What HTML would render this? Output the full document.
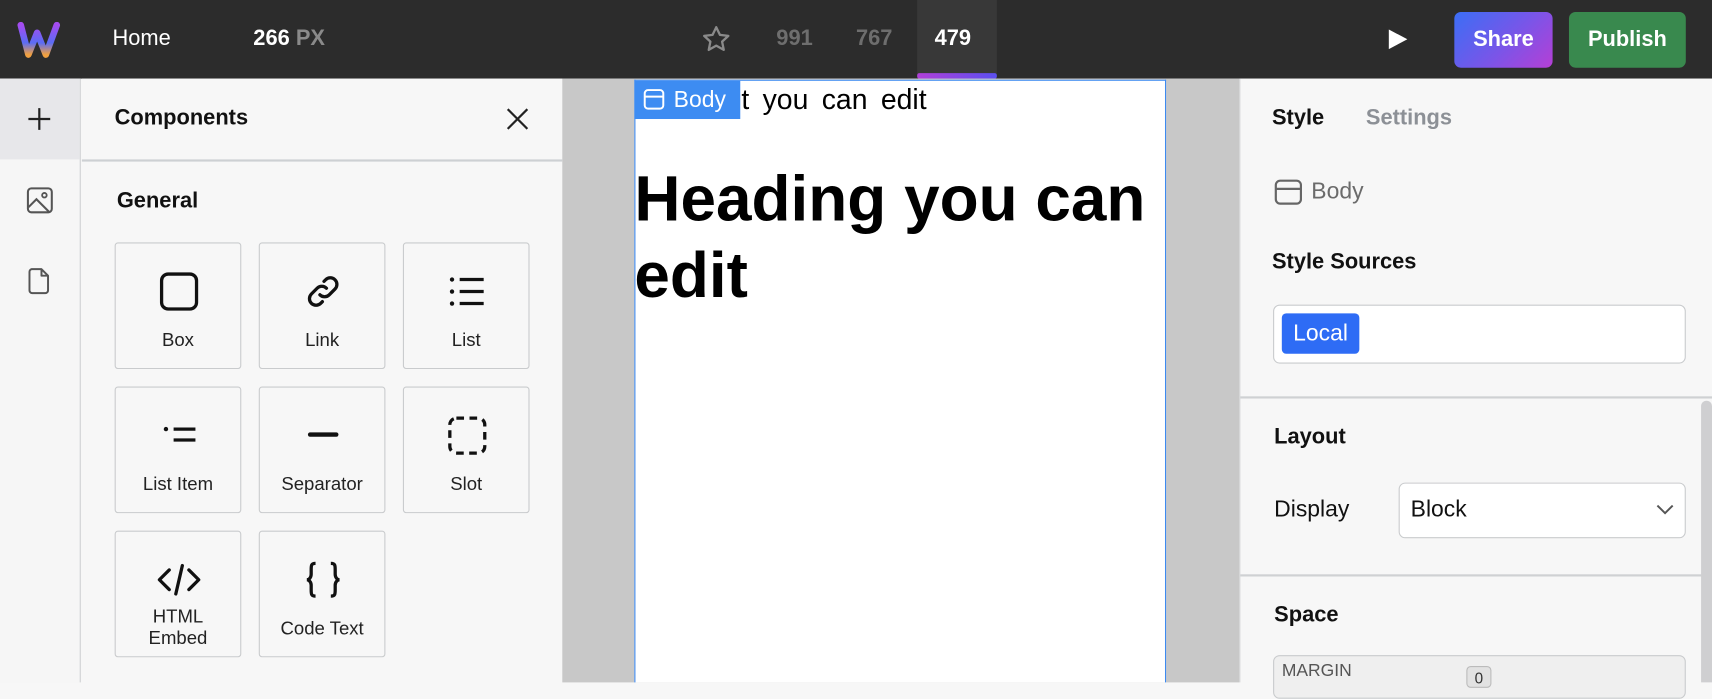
<!DOCTYPE html>
<html><head><meta charset="utf-8"><style>
*{box-sizing:border-box;margin:0;padding:0}
html,body{width:1712px;height:682px;overflow:hidden;background:#f7f7f7}
#r{position:absolute;left:0;top:0;width:1568px;height:625px;transform:scale(1.091837);transform-origin:0 0;font-family:"Liberation Sans",Arial,sans-serif;color:#111}
.a{position:absolute}
.t{position:absolute;white-space:nowrap}
.top{left:0;top:0;width:1568px;height:72px;background:#2c2c2c}
.tile{position:absolute;width:116px;height:116px;border:1.5px solid #c9cbcd;border-radius:3px;background:#f7f7f7}
.tile svg{position:absolute;left:40px;top:26px}
.tile .l{position:absolute;left:0;right:0;top:78px;text-align:center;font-size:17px;color:#222;line-height:22px}
.h{font-weight:bold;font-size:20px;color:#111}
</style></head><body><div id="r">
<div class="a top"></div>
<svg class="a" style="left:16px;top:20px" width="40" height="34" viewBox="0 0 40 34"><defs><linearGradient id="g2" x1="0" y1="0" x2="0" y2="1"><stop offset="0" stop-color="#a44cf0"/><stop offset=".6" stop-color="#5b6cf5"/><stop offset="1" stop-color="#f0a040"/></linearGradient></defs><path d="M3 3 L10 30 L18 10 L26 30 L36 3" fill="none" stroke="url(#g2)" stroke-width="6" stroke-linecap="round" stroke-linejoin="round"/></svg>
<div class="t" style="left:103px;top:24px;font-size:20px;color:#fff">Home</div>
<div class="t" style="left:232px;top:24px;font-size:20px;color:#fff;font-weight:bold">266 <span style="color:#8a8a8a">PX</span></div>
<svg class="a" style="left:641px;top:22px" width="30" height="28" viewBox="0 0 24 24"><path d="M12 2.5l2.9 6 6.6.8-4.9 4.5 1.3 6.5L12 17l-5.9 3.3 1.3-6.5L2.5 9.3l6.6-.8z" fill="none" stroke="#8a8a8a" stroke-width="1.8" stroke-linejoin="round"/></svg>
<div class="t" style="left:711px;top:24px;font-size:20px;color:#6e6e6e;font-weight:bold">991</div>
<div class="t" style="left:784px;top:24px;font-size:20px;color:#6e6e6e;font-weight:bold">767</div>
<div class="a" style="left:840px;top:0;width:73px;height:72px;background:#383838"></div>
<div class="a" style="left:840px;top:67px;width:73px;height:5px;border-radius:2px;background:linear-gradient(90deg,#b13fd8,#5a4ff0)"></div>
<div class="t" style="left:856px;top:24px;font-size:20px;color:#fff;font-weight:bold">479</div>
<svg class="a" style="left:1271px;top:27px" width="18" height="18" viewBox="0 0 18 18"><path d="M1 0L18 9L1 18z" fill="#fff"/></svg>
<div class="a" style="left:1332px;top:11px;width:90px;height:51px;border-radius:6px;background:linear-gradient(135deg,#3b6ef5,#7a55e8 55%,#b53fd5);color:#fff;font-weight:bold;font-size:20px;text-align:center;line-height:51px">Share</div>
<div class="a" style="left:1437px;top:11px;width:107px;height:51px;border-radius:6px;background:#39894e;color:#fff;font-weight:bold;font-size:20px;text-align:center;line-height:51px">Publish</div>

<div class="a" style="left:0;top:72px;width:74px;height:553px;background:#f6f6f6;border-right:1.5px solid #cfd1d3"></div>
<div class="a" style="left:0;top:72px;width:73px;height:74px;background:#e7e7ea"></div>
<svg class="a" style="left:24px;top:97px" width="24" height="24" viewBox="0 0 24 24"><path d="M12 2v20M2 12h20" stroke="#222" stroke-width="2"/></svg>
<svg class="a" style="left:24px;top:171px" width="25" height="25" viewBox="0 0 24 24"><rect x="1.5" y="1.5" width="21" height="21" rx="3" fill="none" stroke="#555" stroke-width="1.8"/><circle cx="16" cy="7.5" r="2" fill="none" stroke="#555" stroke-width="1.6"/><path d="M2 18l7-7 11 11" fill="none" stroke="#555" stroke-width="1.8"/></svg>
<svg class="a" style="left:26px;top:245px" width="20" height="25" viewBox="0 0 20 25"><path d="M3 1.5h9l6 6V21a2.5 2.5 0 0 1-2.5 2.5h-12A2.5 2.5 0 0 1 1 21V4A2.5 2.5 0 0 1 3 1.5zM12 1.5v6h6" fill="none" stroke="#555" stroke-width="1.8" stroke-linejoin="round"/></svg>

<div class="a" style="left:75px;top:72px;width:440px;height:553px;background:#f7f7f7"></div>
<div class="a" style="left:75px;top:146px;width:440px;height:2px;background:#cdd0d3"></div>
<div class="t h" style="left:105px;top:97px">Components</div>
<svg class="a" style="left:463px;top:98px" width="22" height="22" viewBox="0 0 22 22"><path d="M2 2l18 18M20 2L2 20" stroke="#222" stroke-width="2"/></svg>
<div class="t h" style="left:107px;top:173px">General</div>

<div class="tile" style="left:105px;top:222px"><svg width="36" height="36" viewBox="0 0 36 36"><rect x="2" y="2" width="32" height="32" rx="6" fill="none" stroke="#111" stroke-width="3"/></svg><div class="l">Box</div></div>
<div class="tile" style="left:237px;top:222px"><svg width="36" height="36" viewBox="0 0 24 24"><path d="M10 14a4 4 0 0 0 5.7 0l3.5-3.5a4 4 0 0 0-5.7-5.7l-1 1M14 10a4 4 0 0 0-5.7 0l-3.5 3.5a4 4 0 0 0 5.7 5.7l1-1" fill="none" stroke="#111" stroke-width="2" stroke-linecap="round"/></svg><div class="l">Link</div></div>
<div class="tile" style="left:369px;top:222px"><svg width="36" height="36" viewBox="0 0 36 36"><circle cx="4" cy="7" r="2" fill="#111"/><circle cx="4" cy="18" r="2" fill="#111"/><circle cx="4" cy="29" r="2" fill="#111"/><path d="M11 7h22M11 18h22M11 29h22" stroke="#111" stroke-width="3"/></svg><div class="l">List</div></div>
<div class="tile" style="left:105px;top:354px"><svg width="36" height="36" viewBox="0 0 36 36"><circle cx="6" cy="12" r="2" fill="#111"/><path d="M13 12h20M13 22h20" stroke="#111" stroke-width="3"/></svg><div class="l">List Item</div></div>
<div class="tile" style="left:237px;top:354px"><svg width="36" height="36" viewBox="0 0 36 36"><path d="M6 17h24" stroke="#111" stroke-width="4" stroke-linecap="round"/></svg><div class="l">Separator</div></div>
<div class="tile" style="left:369px;top:354px"><svg width="36" height="36" viewBox="0 0 36 36"><rect x="2" y="2" width="32" height="32" rx="6" fill="none" stroke="#111" stroke-width="3" stroke-dasharray="7 5"/></svg><div class="l">Slot</div></div>
<div class="tile" style="left:105px;top:486px"><svg width="40" height="36" viewBox="0 0 40 36" style="left:38px"><path d="M11 9L2 18l9 9M29 9l9 9-9 9M23 5l-6 26" fill="none" stroke="#111" stroke-width="3" stroke-linecap="round" stroke-linejoin="round"/></svg><div class="l" style="top:68px;line-height:20px">HTML<br>Embed</div></div>
<div class="tile" style="left:237px;top:486px"><svg width="36" height="36" viewBox="0 0 36 36"><path d="M11 3c-4 0-4 2-4 6v4c0 3-2 5-4 5 2 0 4 2 4 5v4c0 4 0 6 4 6M25 3c4 0 4 2 4 6v4c0 3 2 5 4 5-2 0-4 2-4 5v4c0 4 0 6-4 6" fill="none" stroke="#111" stroke-width="3"/></svg><div class="l">Code Text</div></div>

<div class="a" style="left:515px;top:72px;width:620px;height:553px;background:#c8c8c8"></div>
<div class="a" style="left:581px;top:73px;width:487px;height:552px;background:#fff;border:1.5px solid #3d8af0;border-bottom:none"></div>
<div class="t" style="left:679px;top:76px;font-size:26px;color:#000;word-spacing:5px">t you can edit</div>
<div class="a" style="left:581px;top:74px;width:97px;height:35px;background:#3d8cf2"></div>
<svg class="a" style="left:589px;top:81px" width="20" height="20" viewBox="0 0 20 20"><rect x="1.5" y="1.5" width="17" height="17" rx="3" fill="none" stroke="#fff" stroke-width="1.8"/><path d="M1.5 7.5h17" stroke="#fff" stroke-width="1.8"/></svg>
<div class="t" style="left:617px;top:80px;font-size:21px;color:#fff">Body</div>
<div class="a" style="left:581px;top:148px;width:486px;font-size:58.5px;font-weight:bold;line-height:70px;color:#000">Heading you can edit</div>

<div class="a" style="left:1135px;top:72px;width:433px;height:553px;background:#f7f7f7;border-left:1.5px solid #cfd1d3"></div>
<div class="t h" style="left:1165px;top:97px">Style</div>
<div class="t h" style="left:1251px;top:97px;color:#8c9096">Settings</div>
<svg class="a" style="left:1167px;top:164px" width="26" height="24" viewBox="0 0 26 24"><rect x="1.5" y="1.5" width="23" height="21" rx="4" fill="none" stroke="#666" stroke-width="2"/><path d="M1.5 9h23" stroke="#666" stroke-width="2"/></svg>
<div class="t" style="left:1201px;top:164px;font-size:21px;color:#6b6b6b">Body</div>
<div class="t h" style="left:1165px;top:229px">Style Sources</div>
<div class="a" style="left:1166px;top:279px;width:378px;height:54px;background:#fff;border:1.5px solid #c9cbcd;border-radius:6px"></div>
<div class="a" style="left:1174px;top:287px;width:71px;height:37px;background:#2e6cf5;border-radius:4px;color:#fff;font-size:21px;line-height:37px;text-align:center">Local</div>
<div class="a" style="left:1136px;top:363px;width:432px;height:2px;background:#cfd1d3"></div>
<div class="t h" style="left:1167px;top:389px">Layout</div>
<div class="t" style="left:1167px;top:455px;font-size:21px;color:#111">Display</div>
<div class="a" style="left:1281px;top:442px;width:263px;height:51px;background:#fff;border:1.5px solid #c9cbcd;border-radius:6px"></div>
<div class="t" style="left:1292px;top:455px;font-size:21px;color:#111">Block</div>
<svg class="a" style="left:1517px;top:462px" width="16" height="10" viewBox="0 0 16 10"><path d="M1 1l7 7 7-7" fill="none" stroke="#555" stroke-width="1.8"/></svg>
<div class="a" style="left:1136px;top:526px;width:424px;height:2px;background:#cfd1d3"></div>
<div class="t h" style="left:1167px;top:552px">Space</div>
<div class="a" style="left:1166px;top:600px;width:378px;height:40px;background:#efefef;border:1.5px solid #c9cbcd;border-radius:6px"></div>
<div class="t" style="left:1174px;top:606px;font-size:16px;color:#555">MARGIN</div>
<div class="a" style="left:1343px;top:610px;width:23px;height:20px;background:#e2e2e2;border:1.5px solid #bbb;border-radius:4px;font-size:14px;text-align:center;line-height:20px;color:#333">0</div>
<div class="a" style="left:1558px;top:367px;width:10px;height:258px;background:#cfcfd1;border-radius:5px 5px 0 0"></div>
</div></body></html>
